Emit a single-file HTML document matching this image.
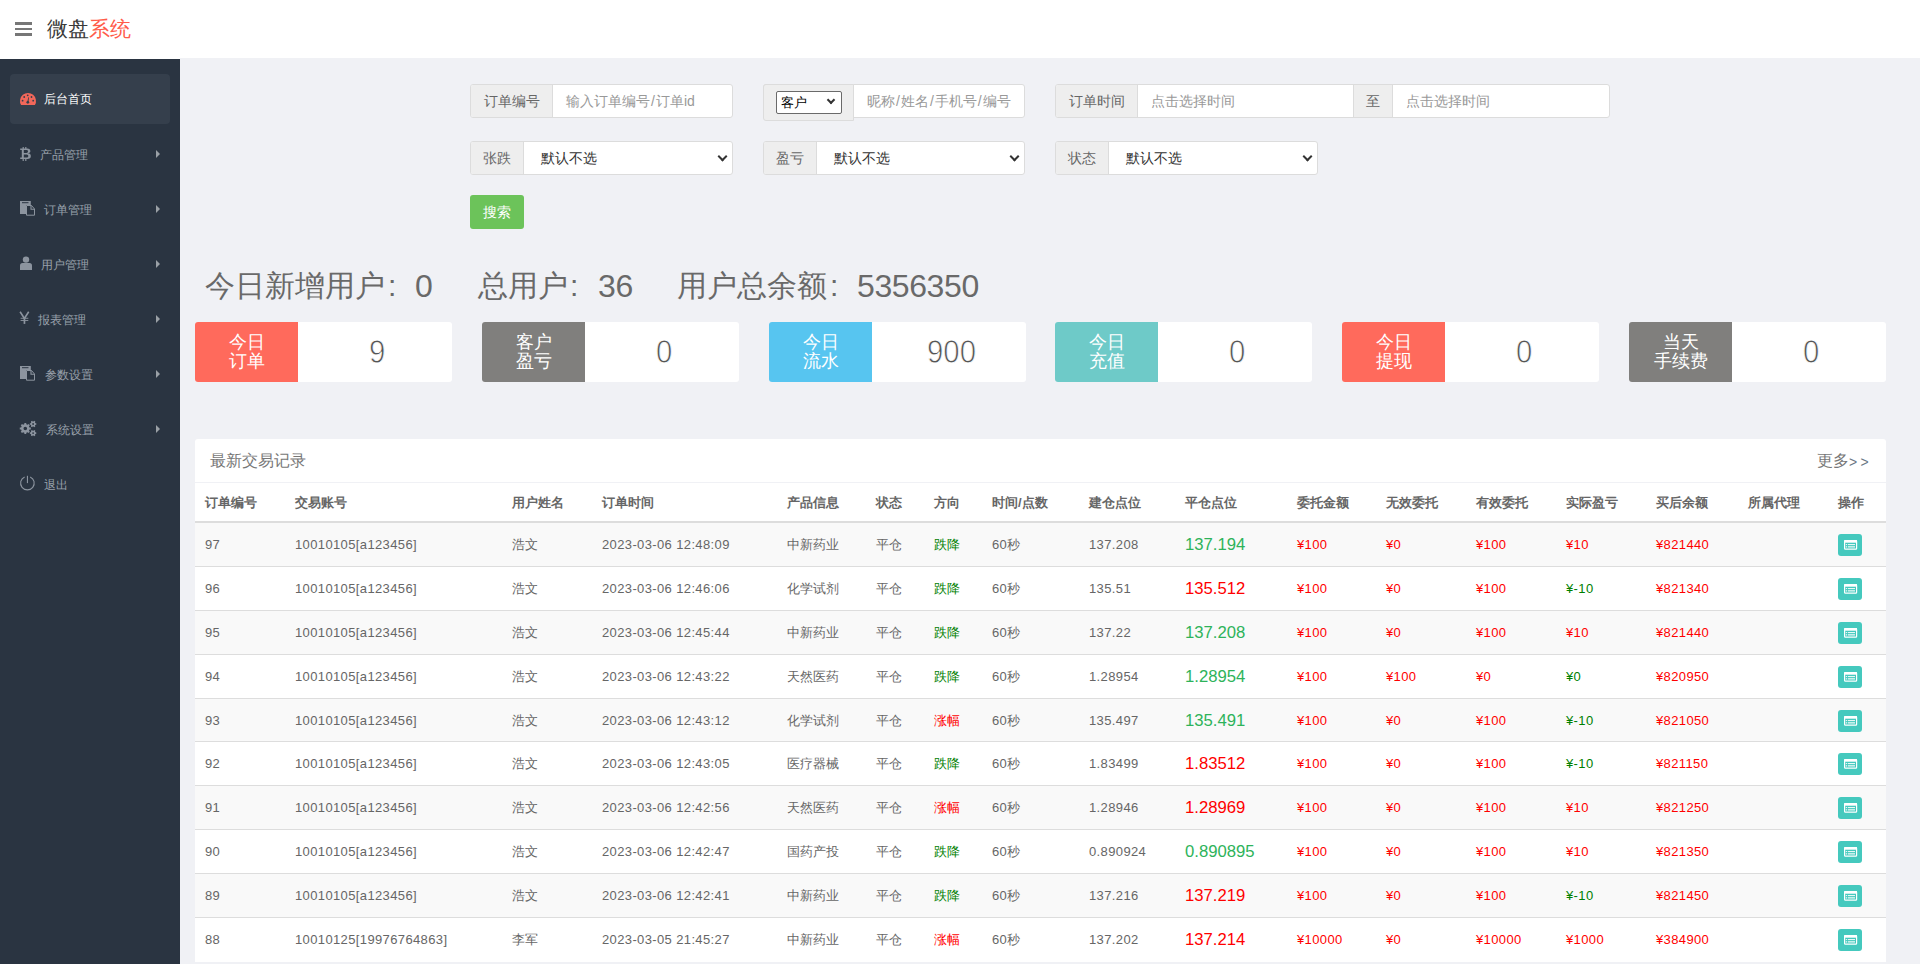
<!DOCTYPE html><html><head><meta charset="utf-8"><style>
*{margin:0;padding:0;box-sizing:border-box}
html,body{width:1920px;height:964px;overflow:hidden;background:#f0f1f5;font-family:"Liberation Sans",sans-serif;}
.a{position:absolute;white-space:nowrap}
#hdr{position:absolute;left:0;top:0;width:1920px;height:58px;background:#fff}
#hdr2{position:absolute;left:0;top:58px;width:180px;height:1px;background:#fff}
#side{position:absolute;left:0;top:59px;width:180px;height:905px;background:#2a3441}
.act{position:absolute;left:10px;top:74px;width:160px;height:50px;background:#353f4c;border-radius:4px}
.mi{position:absolute;font-size:12px;color:#8c949e;line-height:12px}
.arr{position:absolute;left:156px;width:0;height:0;border-left:4px solid #9aa0a6;border-top:4px solid transparent;border-bottom:4px solid transparent}
.grp{position:absolute;border:1px solid #dcdcdc;border-radius:3px;background:#fff;overflow:hidden}
.add{position:absolute;top:0;bottom:0;background:#eee;border-right:1px solid #dcdcdc;color:#666;font-size:14px}
.ph{position:absolute;color:#999;font-size:14px}
.sel{position:absolute;color:#333;font-size:14px}
.sl{font-style:normal;margin:0 1px}
.chev{position:absolute;width:7px;height:7px;border-right:2px solid #333;border-bottom:2px solid #333;transform:rotate(45deg)}
.box{position:absolute;top:322px;width:257px;height:60px;background:#fff;border-radius:3px;overflow:hidden}
.lab{position:absolute;left:0;top:0;width:103px;height:60px;color:#fff;font-size:18px;line-height:19px;text-align:center;padding-top:11px}
.num{position:absolute;left:103px;top:0;width:154px;height:60px;padding-left:5px;text-align:center;font-size:33px;line-height:60px;color:#555;-webkit-text-stroke:0.8px #fff}
#panel{position:absolute;left:195px;top:439px;width:1691px;height:522px;background:#fff;border-radius:3px;overflow:hidden}
.th{position:absolute;font-size:13px;font-weight:bold;color:#666;line-height:13px}
.td{position:absolute;font-size:13px;color:#666;line-height:13px;letter-spacing:0.37px}
.row{position:absolute;left:195px;width:1691px;border-bottom:1px solid #ddd}
.btn{position:absolute;left:1838px;width:24px;height:22px;background:#45c9be;border-radius:3px}
</style></head><body>
<div id="hdr"></div><div id="hdr2"></div>
<div class="a" style="left:15px;top:22px;width:17px;height:2.5px;background:#777"></div>
<div class="a" style="left:15px;top:27.5px;width:17px;height:2.5px;background:#777"></div>
<div class="a" style="left:15px;top:33px;width:17px;height:2.5px;background:#777"></div>
<div class="a" style="left:47px;top:16px;font-size:21px;line-height:26px;color:#3a3a3a">微盘<span style="color:#ff5b4a">系统</span></div>
<div id="side"></div><div class="act"></div>
<div class="mi" style="left:44px;top:93px;color:#fff">后台首页</div>
<div class="mi" style="left:40px;top:149px;color:#99a1ab">产品管理</div>
<div class="arr" style="top:150px"></div>
<div class="mi" style="left:44px;top:204px;color:#99a1ab">订单管理</div>
<div class="arr" style="top:205px"></div>
<div class="mi" style="left:41px;top:259px;color:#99a1ab">用户管理</div>
<div class="arr" style="top:260px"></div>
<div class="mi" style="left:38px;top:314px;color:#99a1ab">报表管理</div>
<div class="arr" style="top:315px"></div>
<div class="mi" style="left:45px;top:369px;color:#99a1ab">参数设置</div>
<div class="arr" style="top:370px"></div>
<div class="mi" style="left:46px;top:424px;color:#99a1ab">系统设置</div>
<div class="arr" style="top:425px"></div>
<div class="mi" style="left:44px;top:479px;color:#99a1ab">退出</div>
<svg class="a" style="left:0;top:0" width="180" height="964" viewBox="0 0 180 964"><path d="M21.1 105.1 A8 8.1 0 1 1 34.9 105.1 Z" fill="#f2675a"/><g fill="#353f4c"><circle cx="22.6" cy="100.7" r="0.9"/><circle cx="24.2" cy="97" r="0.9"/><circle cx="27.7" cy="95.3" r="0.9"/><circle cx="31.5" cy="97" r="0.9"/><circle cx="33.2" cy="100.7" r="0.9"/><circle cx="27.8" cy="102.3" r="1.4"/><path d="M27.2 102 L28.4 97.2 L29 97.3 L28.4 102.2Z"/></g><g fill="#8c949f"><path d="M20.2 148.6 H27 A3 2.3 0 0 1 27.6 153.3 A3.1 2.6 0 0 1 27.4 158.9 H20.2 V157.6 H21.8 V150 H20.2Z M23.8 150 V152.9 H26.6 A1.4 1.45 0 0 0 26.6 150Z M23.8 154.4 V157.5 H26.8 A1.55 1.55 0 0 0 26.8 154.4Z" fill-rule="evenodd"/><rect x="22.6" y="147" width="1.2" height="2" /><rect x="25.2" y="147" width="1.2" height="2"/><rect x="22.6" y="158.5" width="1.2" height="2.5"/><rect x="25.2" y="158.5" width="1.2" height="2.5"/></g><g><path d="M20 201 H30.8 V205 H26 V213.9 H20Z" fill="#8c949f"/><rect x="22" y="202.2" width="6.5" height="1" fill="#2a3441"/><path d="M26.5 205.5 H31.5 L34.5 209 V215.2 H26.5Z" fill="none" stroke="#8c949f" stroke-width="1"/><path d="M31 205.5 V209.3 H34.5" fill="none" stroke="#8c949f" stroke-width="1.1"/></g><g><path d="M20 366 H30.8 V370 H26 V378.9 H20Z" fill="#8c949f"/><rect x="22" y="367.2" width="6.5" height="1" fill="#2a3441"/><path d="M26.5 370.5 H31.5 L34.5 374 V380.2 H26.5Z" fill="none" stroke="#8c949f" stroke-width="1"/><path d="M31 370.5 V374.3 H34.5" fill="none" stroke="#8c949f" stroke-width="1.1"/></g><circle cx="26" cy="259.6" r="3.2" fill="#8c949f"/><path d="M20 270 V265.5 A2.5 2.5 0 0 1 22.5 263 H29.5 A2.5 2.5 0 0 1 32 265.5 V270Z" fill="#8c949f"/><path d="M20.1 311.8 L24.4 318.5 L28.7 311.8" fill="none" stroke="#8c949f" stroke-width="1.6"/><rect x="23.6" y="317.5" width="1.7" height="6.4" fill="#8c949f"/><rect x="20.6" y="317.8" width="7.7" height="0.9" fill="#8c949f"/><rect x="20.6" y="320" width="7.7" height="0.9" fill="#8c949f"/><g fill="#8c949f" fill-rule="evenodd"><path d="M30.83 427.60 L30.83 429.40 L29.48 429.51 L28.97 430.74 L29.85 431.77 L28.57 433.05 L27.54 432.17 L26.31 432.68 L26.20 434.03 L24.40 434.03 L24.29 432.68 L23.06 432.17 L22.03 433.05 L20.75 431.77 L21.63 430.74 L21.12 429.51 L19.77 429.40 L19.77 427.60 L21.12 427.49 L21.63 426.26 L20.75 425.23 L22.03 423.95 L23.06 424.83 L24.29 424.32 L24.40 422.97 L26.20 422.97 L26.31 424.32 L27.54 424.83 L28.57 423.95 L29.85 425.23 L28.97 426.26 L29.48 427.49Z M27.10 428.50 A1.8 1.8 0 1 0 23.50 428.50 A1.8 1.8 0 1 0 27.10 428.50Z"/><path d="M36.32 423.29 L36.32 424.71 L35.48 424.78 L34.96 425.67 L35.32 426.44 L34.10 427.15 L33.61 426.45 L32.59 426.45 L32.10 427.15 L30.88 426.44 L31.24 425.67 L30.72 424.78 L29.88 424.71 L29.88 423.29 L30.72 423.22 L31.24 422.33 L30.88 421.56 L32.10 420.85 L32.59 421.55 L33.61 421.55 L34.10 420.85 L35.32 421.56 L34.96 422.33 L35.48 423.22Z M34.00 424.00 A0.9 0.9 0 1 0 32.20 424.00 A0.9 0.9 0 1 0 34.00 424.00Z"/><path d="M36.32 432.39 L36.32 433.81 L35.48 433.88 L34.96 434.77 L35.32 435.54 L34.10 436.25 L33.61 435.55 L32.59 435.55 L32.10 436.25 L30.88 435.54 L31.24 434.77 L30.72 433.88 L29.88 433.81 L29.88 432.39 L30.72 432.32 L31.24 431.43 L30.88 430.66 L32.10 429.95 L32.59 430.65 L33.61 430.65 L34.10 429.95 L35.32 430.66 L34.96 431.43 L35.48 432.32Z M34.00 433.10 A0.9 0.9 0 1 0 32.20 433.10 A0.9 0.9 0 1 0 34.00 433.10Z"/></g><path d="M24.6 476.9 A6.8 6.8 0 1 0 30.2 476.9" fill="none" stroke="#8c949f" stroke-width="1.1"/><rect x="26.9" y="475.8" width="1.1" height="7.3" fill="#8c949f"/></svg>
<div class="grp" style="left:470px;top:84px;width:263px;height:34px"><div class="add" style="left:0;width:82px;line-height:32px;text-align:center">订单编号</div><div class="ph" style="left:95px;top:0;line-height:32px">输入订单编号<span style="margin:0 1px">/</span>订单id</div></div>
<div class="grp" style="left:1055px;top:84px;width:555px;height:34px"><div class="add" style="left:0;width:82px;line-height:32px;text-align:center">订单时间</div><div class="ph" style="left:95px;top:0;line-height:32px">点击选择时间</div></div>
<div class="add a" style="left:1353px;top:84px;height:34px;width:40px;border:1px solid #dcdcdc;line-height:32px;text-align:center">至</div>
<div class="ph" style="left:1406px;top:84px;line-height:34px">点击选择时间</div>
<div class="grp" style="left:763px;top:84px;width:262px;height:34px"><div class="ph" style="left:103px;top:0;line-height:32px">昵称<i class=sl>/</i>姓名<i class=sl>/</i>手机号<i class=sl>/</i>编号</div></div>
<div class="a" style="left:763px;top:84px;width:91px;height:37px;background:#eee;border:1px solid #dcdcdc;border-radius:3px 0 0 3px"></div>
<div class="a" style="left:776px;top:91px;width:66px;height:23px;background:#fff;border:1px solid #6a6a6a;border-radius:2px;font-size:13px;line-height:21px;padding-left:4px;color:#000">客户</div>
<div class="chev" style="left:828px;top:97px;width:6px;height:6px;border-width:2.2px"></div>
<div class="grp" style="left:470px;top:141px;width:263px;height:34px"><div class="add" style="left:0;width:53px;line-height:32px;text-align:center">张跌</div><div class="sel" style="left:70px;top:0;line-height:32px">默认不选</div><div class="chev" style="left:248px;top:11px"></div></div>
<div class="grp" style="left:763px;top:141px;width:262px;height:34px"><div class="add" style="left:0;width:53px;line-height:32px;text-align:center">盈亏</div><div class="sel" style="left:70px;top:0;line-height:32px">默认不选</div><div class="chev" style="left:247px;top:11px"></div></div>
<div class="grp" style="left:1055px;top:141px;width:263px;height:34px"><div class="add" style="left:0;width:53px;line-height:32px;text-align:center">状态</div><div class="sel" style="left:70px;top:0;line-height:32px">默认不选</div><div class="chev" style="left:248px;top:11px"></div></div>
<div class="a" style="left:470px;top:195px;width:54px;height:34px;background:#6cc35a;border-radius:3px;color:#fff;font-size:14px;line-height:34px;text-align:center">搜索</div>
<div style="position:absolute;white-space:nowrap;font-size:30px;line-height:36px;color:#696969;top:268px;left:205px">今日新增用户</div>
<div style="position:absolute;white-space:nowrap;font-size:30px;line-height:36px;color:#696969;top:268px;left:388px">:</div>
<div style="position:absolute;white-space:nowrap;font-size:32px;line-height:36px;color:#696969;top:268px;letter-spacing:-0.4px;left:415px">0</div>
<div style="position:absolute;white-space:nowrap;font-size:30px;line-height:36px;color:#696969;top:268px;left:478px">总用户</div>
<div style="position:absolute;white-space:nowrap;font-size:30px;line-height:36px;color:#696969;top:268px;left:570px">:</div>
<div style="position:absolute;white-space:nowrap;font-size:32px;line-height:36px;color:#696969;top:268px;letter-spacing:-0.4px;left:598px">36</div>
<div style="position:absolute;white-space:nowrap;font-size:30px;line-height:36px;color:#696969;top:268px;left:677px">用户总余额</div>
<div style="position:absolute;white-space:nowrap;font-size:30px;line-height:36px;color:#696969;top:268px;left:830px">:</div>
<div style="position:absolute;white-space:nowrap;font-size:32px;line-height:36px;color:#696969;top:268px;letter-spacing:-0.4px;left:857px">5356350</div>
<div class="box" style="left:195px"><div class="lab" style="background:#ff6a5c">今日<br>订单</div><div class="num"><span style="display:inline-block;transform:scaleX(0.89)">9</span></div></div>
<div class="box" style="left:482px"><div class="lab" style="background:#807f7d">客户<br>盈亏</div><div class="num"><span style="display:inline-block;transform:scaleX(0.89)">0</span></div></div>
<div class="box" style="left:769px"><div class="lab" style="background:#57c5f0">今日<br>流水</div><div class="num"><span style="display:inline-block;transform:scaleX(0.89)">900</span></div></div>
<div class="box" style="left:1055px"><div class="lab" style="background:#6ecac8">今日<br>充值</div><div class="num"><span style="display:inline-block;transform:scaleX(0.89)">0</span></div></div>
<div class="box" style="left:1342px"><div class="lab" style="background:#ff6a5c">今日<br>提现</div><div class="num"><span style="display:inline-block;transform:scaleX(0.89)">0</span></div></div>
<div class="box" style="left:1629px"><div class="lab" style="background:#807f7d">当天<br>手续费</div><div class="num"><span style="display:inline-block;transform:scaleX(0.89)">0</span></div></div>
<div id="panel"></div>
<div class="a" style="left:210px;top:451px;font-size:16px;line-height:20px;color:#777">最新交易记录</div>
<div class="a" style="left:1817px;top:451px;font-size:16px;line-height:20px;color:#777">更多<span style="font-size:14px;letter-spacing:3.2px;color:#6b7785;position:relative;top:1px">&gt;&gt;</span></div>
<div class="a" style="left:195px;top:482px;width:1691px;height:1px;background:#f0f1f5"></div>
<div class="th" style="left:205px;top:496px">订单编号</div>
<div class="th" style="left:295px;top:496px">交易账号</div>
<div class="th" style="left:512px;top:496px">用户姓名</div>
<div class="th" style="left:602px;top:496px">订单时间</div>
<div class="th" style="left:787px;top:496px">产品信息</div>
<div class="th" style="left:876px;top:496px">状态</div>
<div class="th" style="left:934px;top:496px">方向</div>
<div class="th" style="left:992px;top:496px">时间/点数</div>
<div class="th" style="left:1089px;top:496px">建仓点位</div>
<div class="th" style="left:1185px;top:496px">平仓点位</div>
<div class="th" style="left:1297px;top:496px">委托金额</div>
<div class="th" style="left:1386px;top:496px">无效委托</div>
<div class="th" style="left:1476px;top:496px">有效委托</div>
<div class="th" style="left:1566px;top:496px">实际盈亏</div>
<div class="th" style="left:1656px;top:496px">买后余额</div>
<div class="th" style="left:1748px;top:496px">所属代理</div>
<div class="th" style="left:1838px;top:496px">操作</div>
<div class="a" style="left:195px;top:521px;width:1691px;height:2px;background:#ddd"></div>
<div class="row" style="top:523px;height:44px;background:#f9f9f9;"></div>
<div class="td" style="left:205px;top:538px;">97</div>
<div class="td" style="left:295px;top:538px;">10010105[a123456]</div>
<div class="td" style="left:512px;top:538px;letter-spacing:0;">浩文</div>
<div class="td" style="left:602px;top:538px;">2023-03-06 12:48:09</div>
<div class="td" style="left:787px;top:538px;letter-spacing:0;">中新药业</div>
<div class="td" style="left:876px;top:538px;letter-spacing:0;">平仓</div>
<div class="td" style="left:934px;top:538px;letter-spacing:0;color:#008000">跌降</div>
<div class="td" style="left:992px;top:538px;">60秒</div>
<div class="td" style="left:1089px;top:538px;">137.208</div>
<div class="td" style="left:1185px;top:536px;font-size:16.7px;line-height:17px;letter-spacing:0;color:#2eb35a">137.194</div>
<div class="td" style="left:1297px;top:538px;color:#f00">¥100</div>
<div class="td" style="left:1386px;top:538px;color:#f00">¥0</div>
<div class="td" style="left:1476px;top:538px;color:#f00">¥100</div>
<div class="td" style="left:1566px;top:538px;color:#f00">¥10</div>
<div class="td" style="left:1656px;top:538px;color:#f00">¥821440</div>
<div class="btn" style="top:534px"><svg width="24" height="22" viewBox="0 0 24 22" style="position:absolute;left:0;top:0"><rect x="6.6" y="6.6" width="12" height="8.6" rx="0.8" fill="none" stroke="#fff" stroke-width="1.2"/><rect x="6.2" y="6.1" width="12.8" height="2.6" fill="#fff"/><rect x="9.8" y="10" width="7.2" height="1.1" fill="#e6f8f5"/><rect x="9.8" y="12.2" width="7.2" height="1.3" fill="#e6f8f5"/><rect x="7.8" y="10" width="1.2" height="1.1" fill="#e6f8f5"/><rect x="7.8" y="12.2" width="1.2" height="1.3" fill="#e6f8f5"/></svg></div>
<div class="row" style="top:567px;height:44px;background:#fff;"></div>
<div class="td" style="left:205px;top:582px;">96</div>
<div class="td" style="left:295px;top:582px;">10010105[a123456]</div>
<div class="td" style="left:512px;top:582px;letter-spacing:0;">浩文</div>
<div class="td" style="left:602px;top:582px;">2023-03-06 12:46:06</div>
<div class="td" style="left:787px;top:582px;letter-spacing:0;">化学试剂</div>
<div class="td" style="left:876px;top:582px;letter-spacing:0;">平仓</div>
<div class="td" style="left:934px;top:582px;letter-spacing:0;color:#008000">跌降</div>
<div class="td" style="left:992px;top:582px;">60秒</div>
<div class="td" style="left:1089px;top:582px;">135.51</div>
<div class="td" style="left:1185px;top:580px;font-size:16.7px;line-height:17px;letter-spacing:0;color:#f00">135.512</div>
<div class="td" style="left:1297px;top:582px;color:#f00">¥100</div>
<div class="td" style="left:1386px;top:582px;color:#f00">¥0</div>
<div class="td" style="left:1476px;top:582px;color:#f00">¥100</div>
<div class="td" style="left:1566px;top:582px;color:#008000">¥-10</div>
<div class="td" style="left:1656px;top:582px;color:#f00">¥821340</div>
<div class="btn" style="top:578px"><svg width="24" height="22" viewBox="0 0 24 22" style="position:absolute;left:0;top:0"><rect x="6.6" y="6.6" width="12" height="8.6" rx="0.8" fill="none" stroke="#fff" stroke-width="1.2"/><rect x="6.2" y="6.1" width="12.8" height="2.6" fill="#fff"/><rect x="9.8" y="10" width="7.2" height="1.1" fill="#e6f8f5"/><rect x="9.8" y="12.2" width="7.2" height="1.3" fill="#e6f8f5"/><rect x="7.8" y="10" width="1.2" height="1.1" fill="#e6f8f5"/><rect x="7.8" y="12.2" width="1.2" height="1.3" fill="#e6f8f5"/></svg></div>
<div class="row" style="top:611px;height:44px;background:#f9f9f9;"></div>
<div class="td" style="left:205px;top:626px;">95</div>
<div class="td" style="left:295px;top:626px;">10010105[a123456]</div>
<div class="td" style="left:512px;top:626px;letter-spacing:0;">浩文</div>
<div class="td" style="left:602px;top:626px;">2023-03-06 12:45:44</div>
<div class="td" style="left:787px;top:626px;letter-spacing:0;">中新药业</div>
<div class="td" style="left:876px;top:626px;letter-spacing:0;">平仓</div>
<div class="td" style="left:934px;top:626px;letter-spacing:0;color:#008000">跌降</div>
<div class="td" style="left:992px;top:626px;">60秒</div>
<div class="td" style="left:1089px;top:626px;">137.22</div>
<div class="td" style="left:1185px;top:624px;font-size:16.7px;line-height:17px;letter-spacing:0;color:#2eb35a">137.208</div>
<div class="td" style="left:1297px;top:626px;color:#f00">¥100</div>
<div class="td" style="left:1386px;top:626px;color:#f00">¥0</div>
<div class="td" style="left:1476px;top:626px;color:#f00">¥100</div>
<div class="td" style="left:1566px;top:626px;color:#f00">¥10</div>
<div class="td" style="left:1656px;top:626px;color:#f00">¥821440</div>
<div class="btn" style="top:622px"><svg width="24" height="22" viewBox="0 0 24 22" style="position:absolute;left:0;top:0"><rect x="6.6" y="6.6" width="12" height="8.6" rx="0.8" fill="none" stroke="#fff" stroke-width="1.2"/><rect x="6.2" y="6.1" width="12.8" height="2.6" fill="#fff"/><rect x="9.8" y="10" width="7.2" height="1.1" fill="#e6f8f5"/><rect x="9.8" y="12.2" width="7.2" height="1.3" fill="#e6f8f5"/><rect x="7.8" y="10" width="1.2" height="1.1" fill="#e6f8f5"/><rect x="7.8" y="12.2" width="1.2" height="1.3" fill="#e6f8f5"/></svg></div>
<div class="row" style="top:655px;height:44px;background:#fff;"></div>
<div class="td" style="left:205px;top:670px;">94</div>
<div class="td" style="left:295px;top:670px;">10010105[a123456]</div>
<div class="td" style="left:512px;top:670px;letter-spacing:0;">浩文</div>
<div class="td" style="left:602px;top:670px;">2023-03-06 12:43:22</div>
<div class="td" style="left:787px;top:670px;letter-spacing:0;">天然医药</div>
<div class="td" style="left:876px;top:670px;letter-spacing:0;">平仓</div>
<div class="td" style="left:934px;top:670px;letter-spacing:0;color:#008000">跌降</div>
<div class="td" style="left:992px;top:670px;">60秒</div>
<div class="td" style="left:1089px;top:670px;">1.28954</div>
<div class="td" style="left:1185px;top:668px;font-size:16.7px;line-height:17px;letter-spacing:0;color:#2eb35a">1.28954</div>
<div class="td" style="left:1297px;top:670px;color:#f00">¥100</div>
<div class="td" style="left:1386px;top:670px;color:#f00">¥100</div>
<div class="td" style="left:1476px;top:670px;color:#f00">¥0</div>
<div class="td" style="left:1566px;top:670px;color:#008000">¥0</div>
<div class="td" style="left:1656px;top:670px;color:#f00">¥820950</div>
<div class="btn" style="top:666px"><svg width="24" height="22" viewBox="0 0 24 22" style="position:absolute;left:0;top:0"><rect x="6.6" y="6.6" width="12" height="8.6" rx="0.8" fill="none" stroke="#fff" stroke-width="1.2"/><rect x="6.2" y="6.1" width="12.8" height="2.6" fill="#fff"/><rect x="9.8" y="10" width="7.2" height="1.1" fill="#e6f8f5"/><rect x="9.8" y="12.2" width="7.2" height="1.3" fill="#e6f8f5"/><rect x="7.8" y="10" width="1.2" height="1.1" fill="#e6f8f5"/><rect x="7.8" y="12.2" width="1.2" height="1.3" fill="#e6f8f5"/></svg></div>
<div class="row" style="top:699px;height:43px;background:#f9f9f9;"></div>
<div class="td" style="left:205px;top:714px;">93</div>
<div class="td" style="left:295px;top:714px;">10010105[a123456]</div>
<div class="td" style="left:512px;top:714px;letter-spacing:0;">浩文</div>
<div class="td" style="left:602px;top:714px;">2023-03-06 12:43:12</div>
<div class="td" style="left:787px;top:714px;letter-spacing:0;">化学试剂</div>
<div class="td" style="left:876px;top:714px;letter-spacing:0;">平仓</div>
<div class="td" style="left:934px;top:714px;letter-spacing:0;color:#f00">涨幅</div>
<div class="td" style="left:992px;top:714px;">60秒</div>
<div class="td" style="left:1089px;top:714px;">135.497</div>
<div class="td" style="left:1185px;top:712px;font-size:16.7px;line-height:17px;letter-spacing:0;color:#2eb35a">135.491</div>
<div class="td" style="left:1297px;top:714px;color:#f00">¥100</div>
<div class="td" style="left:1386px;top:714px;color:#f00">¥0</div>
<div class="td" style="left:1476px;top:714px;color:#f00">¥100</div>
<div class="td" style="left:1566px;top:714px;color:#008000">¥-10</div>
<div class="td" style="left:1656px;top:714px;color:#f00">¥821050</div>
<div class="btn" style="top:710px"><svg width="24" height="22" viewBox="0 0 24 22" style="position:absolute;left:0;top:0"><rect x="6.6" y="6.6" width="12" height="8.6" rx="0.8" fill="none" stroke="#fff" stroke-width="1.2"/><rect x="6.2" y="6.1" width="12.8" height="2.6" fill="#fff"/><rect x="9.8" y="10" width="7.2" height="1.1" fill="#e6f8f5"/><rect x="9.8" y="12.2" width="7.2" height="1.3" fill="#e6f8f5"/><rect x="7.8" y="10" width="1.2" height="1.1" fill="#e6f8f5"/><rect x="7.8" y="12.2" width="1.2" height="1.3" fill="#e6f8f5"/></svg></div>
<div class="row" style="top:742px;height:44px;background:#fff;"></div>
<div class="td" style="left:205px;top:757px;">92</div>
<div class="td" style="left:295px;top:757px;">10010105[a123456]</div>
<div class="td" style="left:512px;top:757px;letter-spacing:0;">浩文</div>
<div class="td" style="left:602px;top:757px;">2023-03-06 12:43:05</div>
<div class="td" style="left:787px;top:757px;letter-spacing:0;">医疗器械</div>
<div class="td" style="left:876px;top:757px;letter-spacing:0;">平仓</div>
<div class="td" style="left:934px;top:757px;letter-spacing:0;color:#008000">跌降</div>
<div class="td" style="left:992px;top:757px;">60秒</div>
<div class="td" style="left:1089px;top:757px;">1.83499</div>
<div class="td" style="left:1185px;top:755px;font-size:16.7px;line-height:17px;letter-spacing:0;color:#f00">1.83512</div>
<div class="td" style="left:1297px;top:757px;color:#f00">¥100</div>
<div class="td" style="left:1386px;top:757px;color:#f00">¥0</div>
<div class="td" style="left:1476px;top:757px;color:#f00">¥100</div>
<div class="td" style="left:1566px;top:757px;color:#008000">¥-10</div>
<div class="td" style="left:1656px;top:757px;color:#f00">¥821150</div>
<div class="btn" style="top:753px"><svg width="24" height="22" viewBox="0 0 24 22" style="position:absolute;left:0;top:0"><rect x="6.6" y="6.6" width="12" height="8.6" rx="0.8" fill="none" stroke="#fff" stroke-width="1.2"/><rect x="6.2" y="6.1" width="12.8" height="2.6" fill="#fff"/><rect x="9.8" y="10" width="7.2" height="1.1" fill="#e6f8f5"/><rect x="9.8" y="12.2" width="7.2" height="1.3" fill="#e6f8f5"/><rect x="7.8" y="10" width="1.2" height="1.1" fill="#e6f8f5"/><rect x="7.8" y="12.2" width="1.2" height="1.3" fill="#e6f8f5"/></svg></div>
<div class="row" style="top:786px;height:44px;background:#f9f9f9;"></div>
<div class="td" style="left:205px;top:801px;">91</div>
<div class="td" style="left:295px;top:801px;">10010105[a123456]</div>
<div class="td" style="left:512px;top:801px;letter-spacing:0;">浩文</div>
<div class="td" style="left:602px;top:801px;">2023-03-06 12:42:56</div>
<div class="td" style="left:787px;top:801px;letter-spacing:0;">天然医药</div>
<div class="td" style="left:876px;top:801px;letter-spacing:0;">平仓</div>
<div class="td" style="left:934px;top:801px;letter-spacing:0;color:#f00">涨幅</div>
<div class="td" style="left:992px;top:801px;">60秒</div>
<div class="td" style="left:1089px;top:801px;">1.28946</div>
<div class="td" style="left:1185px;top:799px;font-size:16.7px;line-height:17px;letter-spacing:0;color:#f00">1.28969</div>
<div class="td" style="left:1297px;top:801px;color:#f00">¥100</div>
<div class="td" style="left:1386px;top:801px;color:#f00">¥0</div>
<div class="td" style="left:1476px;top:801px;color:#f00">¥100</div>
<div class="td" style="left:1566px;top:801px;color:#f00">¥10</div>
<div class="td" style="left:1656px;top:801px;color:#f00">¥821250</div>
<div class="btn" style="top:797px"><svg width="24" height="22" viewBox="0 0 24 22" style="position:absolute;left:0;top:0"><rect x="6.6" y="6.6" width="12" height="8.6" rx="0.8" fill="none" stroke="#fff" stroke-width="1.2"/><rect x="6.2" y="6.1" width="12.8" height="2.6" fill="#fff"/><rect x="9.8" y="10" width="7.2" height="1.1" fill="#e6f8f5"/><rect x="9.8" y="12.2" width="7.2" height="1.3" fill="#e6f8f5"/><rect x="7.8" y="10" width="1.2" height="1.1" fill="#e6f8f5"/><rect x="7.8" y="12.2" width="1.2" height="1.3" fill="#e6f8f5"/></svg></div>
<div class="row" style="top:830px;height:44px;background:#fff;"></div>
<div class="td" style="left:205px;top:845px;">90</div>
<div class="td" style="left:295px;top:845px;">10010105[a123456]</div>
<div class="td" style="left:512px;top:845px;letter-spacing:0;">浩文</div>
<div class="td" style="left:602px;top:845px;">2023-03-06 12:42:47</div>
<div class="td" style="left:787px;top:845px;letter-spacing:0;">国药产投</div>
<div class="td" style="left:876px;top:845px;letter-spacing:0;">平仓</div>
<div class="td" style="left:934px;top:845px;letter-spacing:0;color:#008000">跌降</div>
<div class="td" style="left:992px;top:845px;">60秒</div>
<div class="td" style="left:1089px;top:845px;">0.890924</div>
<div class="td" style="left:1185px;top:843px;font-size:16.7px;line-height:17px;letter-spacing:0;color:#2eb35a">0.890895</div>
<div class="td" style="left:1297px;top:845px;color:#f00">¥100</div>
<div class="td" style="left:1386px;top:845px;color:#f00">¥0</div>
<div class="td" style="left:1476px;top:845px;color:#f00">¥100</div>
<div class="td" style="left:1566px;top:845px;color:#f00">¥10</div>
<div class="td" style="left:1656px;top:845px;color:#f00">¥821350</div>
<div class="btn" style="top:841px"><svg width="24" height="22" viewBox="0 0 24 22" style="position:absolute;left:0;top:0"><rect x="6.6" y="6.6" width="12" height="8.6" rx="0.8" fill="none" stroke="#fff" stroke-width="1.2"/><rect x="6.2" y="6.1" width="12.8" height="2.6" fill="#fff"/><rect x="9.8" y="10" width="7.2" height="1.1" fill="#e6f8f5"/><rect x="9.8" y="12.2" width="7.2" height="1.3" fill="#e6f8f5"/><rect x="7.8" y="10" width="1.2" height="1.1" fill="#e6f8f5"/><rect x="7.8" y="12.2" width="1.2" height="1.3" fill="#e6f8f5"/></svg></div>
<div class="row" style="top:874px;height:44px;background:#f9f9f9;"></div>
<div class="td" style="left:205px;top:889px;">89</div>
<div class="td" style="left:295px;top:889px;">10010105[a123456]</div>
<div class="td" style="left:512px;top:889px;letter-spacing:0;">浩文</div>
<div class="td" style="left:602px;top:889px;">2023-03-06 12:42:41</div>
<div class="td" style="left:787px;top:889px;letter-spacing:0;">中新药业</div>
<div class="td" style="left:876px;top:889px;letter-spacing:0;">平仓</div>
<div class="td" style="left:934px;top:889px;letter-spacing:0;color:#008000">跌降</div>
<div class="td" style="left:992px;top:889px;">60秒</div>
<div class="td" style="left:1089px;top:889px;">137.216</div>
<div class="td" style="left:1185px;top:887px;font-size:16.7px;line-height:17px;letter-spacing:0;color:#f00">137.219</div>
<div class="td" style="left:1297px;top:889px;color:#f00">¥100</div>
<div class="td" style="left:1386px;top:889px;color:#f00">¥0</div>
<div class="td" style="left:1476px;top:889px;color:#f00">¥100</div>
<div class="td" style="left:1566px;top:889px;color:#008000">¥-10</div>
<div class="td" style="left:1656px;top:889px;color:#f00">¥821450</div>
<div class="btn" style="top:885px"><svg width="24" height="22" viewBox="0 0 24 22" style="position:absolute;left:0;top:0"><rect x="6.6" y="6.6" width="12" height="8.6" rx="0.8" fill="none" stroke="#fff" stroke-width="1.2"/><rect x="6.2" y="6.1" width="12.8" height="2.6" fill="#fff"/><rect x="9.8" y="10" width="7.2" height="1.1" fill="#e6f8f5"/><rect x="9.8" y="12.2" width="7.2" height="1.3" fill="#e6f8f5"/><rect x="7.8" y="10" width="1.2" height="1.1" fill="#e6f8f5"/><rect x="7.8" y="12.2" width="1.2" height="1.3" fill="#e6f8f5"/></svg></div>
<div class="row" style="top:918px;height:44px;background:#fff;border-bottom:none;"></div>
<div class="td" style="left:205px;top:933px;">88</div>
<div class="td" style="left:295px;top:933px;">10010125[19976764863]</div>
<div class="td" style="left:512px;top:933px;letter-spacing:0;">李军</div>
<div class="td" style="left:602px;top:933px;">2023-03-05 21:45:27</div>
<div class="td" style="left:787px;top:933px;letter-spacing:0;">中新药业</div>
<div class="td" style="left:876px;top:933px;letter-spacing:0;">平仓</div>
<div class="td" style="left:934px;top:933px;letter-spacing:0;color:#f00">涨幅</div>
<div class="td" style="left:992px;top:933px;">60秒</div>
<div class="td" style="left:1089px;top:933px;">137.202</div>
<div class="td" style="left:1185px;top:931px;font-size:16.7px;line-height:17px;letter-spacing:0;color:#f00">137.214</div>
<div class="td" style="left:1297px;top:933px;color:#f00">¥10000</div>
<div class="td" style="left:1386px;top:933px;color:#f00">¥0</div>
<div class="td" style="left:1476px;top:933px;color:#f00">¥10000</div>
<div class="td" style="left:1566px;top:933px;color:#f00">¥1000</div>
<div class="td" style="left:1656px;top:933px;color:#f00">¥384900</div>
<div class="btn" style="top:929px"><svg width="24" height="22" viewBox="0 0 24 22" style="position:absolute;left:0;top:0"><rect x="6.6" y="6.6" width="12" height="8.6" rx="0.8" fill="none" stroke="#fff" stroke-width="1.2"/><rect x="6.2" y="6.1" width="12.8" height="2.6" fill="#fff"/><rect x="9.8" y="10" width="7.2" height="1.1" fill="#e6f8f5"/><rect x="9.8" y="12.2" width="7.2" height="1.3" fill="#e6f8f5"/><rect x="7.8" y="10" width="1.2" height="1.1" fill="#e6f8f5"/><rect x="7.8" y="12.2" width="1.2" height="1.3" fill="#e6f8f5"/></svg></div>
</body></html>
